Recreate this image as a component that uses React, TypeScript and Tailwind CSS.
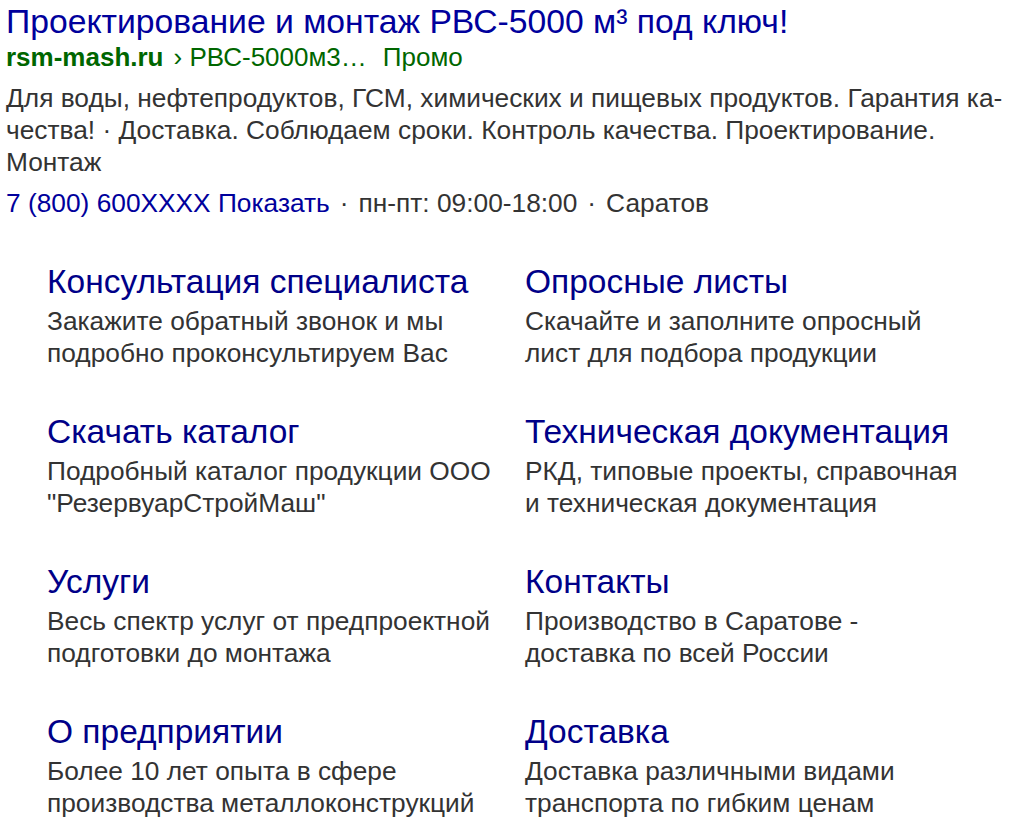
import { type FC } from 'react';

interface Sitelink {
  title: string;
  text: [string, string];
}

const sitelinks: Sitelink[] = [
  { title: 'Консультация специалиста', text: ['Закажите обратный звонок и мы', 'подробно проконсультируем Вас'] },
  { title: 'Опросные листы', text: ['Скачайте и заполните опросный', 'лист для подбора продукции'] },
  { title: 'Скачать каталог', text: ['Подробный каталог продукции ООО', '"РезервуарСтройМаш"'] },
  { title: 'Техническая документация', text: ['РКД, типовые проекты, справочная', 'и техническая документация'] },
  { title: 'Услуги', text: ['Весь спектр услуг от предпроектной', 'подготовки до монтажа'] },
  { title: 'Контакты', text: ['Производство в Саратове -', 'доставка по всей России'] },
  { title: 'О предприятии', text: ['Более 10 лет опыта в сфере', 'производства металлоконструкций'] },
  { title: 'Доставка', text: ['Доставка различными видами', 'транспорта по гибким ценам'] },
];

const App: FC = () => {
  return (
    <div className="w-[1012px] h-[820px] bg-white overflow-hidden font-['Liberation_Sans',Arial,sans-serif] pl-[6px] pt-[2px]">
      <div className="text-[33.7px] leading-[39px] text-[#00009c] whitespace-nowrap">
        Проектирование и монтаж РВС-5000 м³ под ключ!
      </div>
      <div className="text-[26px] leading-[32px] text-[#006600] flex whitespace-nowrap">
        <span className="font-bold">rsm-mash.ru</span>
        <span className="ml-[10px]">› РВС-5000м3…</span>
        <span className="ml-[16px]">Промо</span>
      </div>
      <div className="text-[26.3px] leading-[32px] text-[#333] mt-[9px] whitespace-nowrap">
        Для воды, нефтепродуктов, ГСМ, химических и пищевых продуктов. Гарантия ка-
        <br />
        чества! · Доставка. Соблюдаем сроки. Контроль качества. Проектирование.
        <br />
        Монтаж
      </div>
      <div className="text-[26.3px] leading-[32px] text-[#333] mt-[9px] flex whitespace-nowrap">
        <span className="text-[#00009c]">7 (800) 600XXXX Показать</span>
        <span className="mx-[10px]">·</span>
        <span>пн-пт: 09:00-18:00</span>
        <span className="mx-[10px]">·</span>
        <span>Саратов</span>
      </div>
      <div className="grid grid-cols-[478px_478px] pl-[41px] mt-[43px]">
        {sitelinks.map((s) => (
          <div key={s.title} className="h-[150px] whitespace-nowrap">
            <div className="text-[33.5px] leading-[40px] text-[#000088]">{s.title}</div>
            <div className="text-[26.3px] leading-[32px] text-[#333] mt-[3px]">
              {s.text[0]}
              <br />
              {s.text[1]}
            </div>
          </div>
        ))}
      </div>
    </div>
  );
};

export default App;
